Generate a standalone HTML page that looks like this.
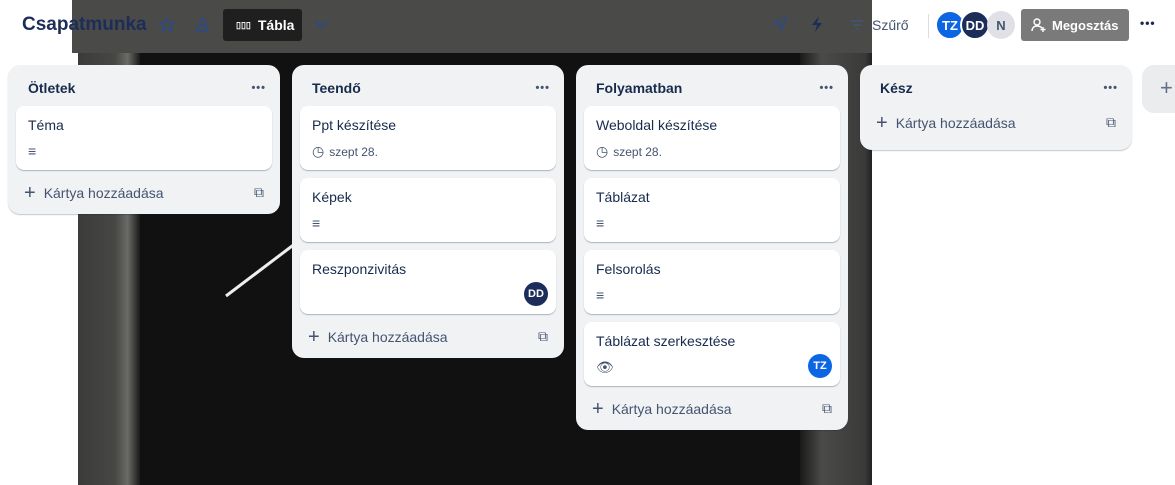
<!DOCTYPE html>
<html><head><meta charset="utf-8"><style>
*{box-sizing:border-box;margin:0;padding:0}
body{width:1175px;height:485px;overflow:hidden;position:relative;background:#fff;font-family:"Liberation Sans",sans-serif;color:#172b4d}
.bg{position:absolute}
.list{position:absolute;width:272px;background:#f1f2f4;border-radius:12px;box-shadow:0 1px 1px rgba(9,30,66,.25)}
.lh{height:41px;display:flex;align-items:center;justify-content:space-between;padding:4px 14px 0 20px;font-size:14px;font-weight:bold;color:#44546f}
.lh span{color:#172b4d}
.dots{font-size:11px;letter-spacing:1px;color:#44546f!important}
.card{margin:0 8px 8px;background:#fff;border-radius:8px;box-shadow:0 1px 1px rgba(9,30,66,.3);height:64px;position:relative;padding:11px 12px;font-size:14px;color:#172b4d}
.card .sub{position:absolute;left:12px;top:37px;font-size:12px;color:#44546f;display:flex;align-items:center;gap:5px}
.add{height:28px;display:flex;align-items:center;justify-content:space-between;padding:0 16px 0 16px;font-size:14px;color:#44546f;margin-bottom:8px}
.add .p{font-size:20px;font-weight:300;margin-right:8px;position:relative;top:1px}
.av{width:24px;height:24px;border-radius:50%;font-size:11px;font-weight:bold;color:#fff;display:flex;align-items:center;justify-content:center;position:absolute;right:8px;bottom:8px}
.hav{width:28px;height:28px;border-radius:50%;font-size:13px;font-weight:bold;display:flex;align-items:center;justify-content:center;position:absolute;top:11px}
</style></head><body>
<div class="bg" style="left:78px;top:0;width:794px;height:485px;background:#111"></div>
<div class="bg" style="left:78px;top:0;width:62px;height:485px;background:linear-gradient(90deg,#3b3b3a,#474745 60%,#6a6a66 80%,#1a1a1a)"></div>
<div class="bg" style="left:800px;top:0;width:72px;height:485px;background:linear-gradient(90deg,#1a1a1a,#4a4b48 30%,#3a3a38 90%,#222)"></div>
<svg class="bg" style="left:0;top:0" width="1175" height="485"><path d="M226 296 L300 240" stroke="#eee" stroke-width="3"/></svg>
<div class="bg" style="left:72px;top:0;width:800px;height:53px;background:#4a4a48"></div>
<div style="position:absolute;left:22px;top:14px;font-size:19px;font-weight:bold;color:#1d2d5a">Csapatmunka</div>
<svg style="position:absolute;left:158px;top:16px" width="18" height="18" viewBox="0 0 24 24"><path d="M12 3l2.7 5.6 6.1.8-4.5 4.2 1.1 6.1L12 16.8 6.6 19.7l1.1-6.1L3.2 9.4l6.1-.8z" fill="none" stroke="#2b4a8a" stroke-width="2"/></svg>
<svg style="position:absolute;left:193px;top:16px" width="18" height="18" viewBox="0 0 24 24"><circle cx="13" cy="8" r="4" fill="none" stroke="#2b4a8a" stroke-width="2"/><path d="M5 20c0-5 4-7 8-7s7 2 7 7z" fill="none" stroke="#2b4a8a" stroke-width="2"/></svg>
<div style="position:absolute;left:223px;top:9px;width:79px;height:32px;background:#1f1f1f;border-radius:3px;color:#fff;font-size:14px;font-weight:bold;display:flex;align-items:center;padding-left:13px"><span style="font-size:9px;margin-right:7px">▯▯▯</span>Tábla</div>
<svg style="position:absolute;left:313px;top:18px" width="16" height="12" viewBox="0 0 16 12"><path d="M2 3l6 6 6-6" stroke="#2b4a8a" stroke-width="2" fill="none"/></svg>
<svg style="position:absolute;left:772px;top:16px" width="16" height="16" viewBox="0 0 24 24"><path d="M21 3L3 10l8 3 3 8z" fill="none" stroke="#2b4a8a" stroke-width="2"/></svg>
<svg style="position:absolute;left:810px;top:16px" width="14" height="16" viewBox="0 0 14 16"><path d="M9 0L2 9h5l-2 7 7-9H7z" fill="#1d2d5a"/></svg>
<svg style="position:absolute;left:850px;top:19px" width="14" height="12" viewBox="0 0 14 12"><path d="M1 2h12M3.5 6h7M5.5 10h3" stroke="#44546f" stroke-width="1.8"/></svg>
<div style="position:absolute;left:872px;top:17px;font-size:14px;color:#44546f">Szűrő</div>
<div style="position:absolute;left:928px;top:14px;width:1px;height:24px;background:#ddd"></div>
<div class="hav" style="left:935px;background:#0c66e4;color:#fff;border:2px solid #fff;width:30px;height:30px;top:10px">TZ</div>
<div class="hav" style="left:960px;background:#1d2d5a;color:#fff;border:2px solid #fff;width:30px;height:30px;top:10px">DD</div>
<div class="hav" style="left:987px;background:#dfe1e6;color:#44546f">N</div>
<div style="position:absolute;left:1021px;top:9px;width:108px;height:32px;background:#7a7a7a;border-radius:3px;color:#fff;font-size:13px;font-weight:bold;display:flex;align-items:center;padding-left:10px"><svg width="16" height="16" viewBox="0 0 16 16" style="margin-right:5px"><circle cx="6" cy="5" r="3" fill="none" stroke="#fff" stroke-width="1.4"/><path d="M1 14c0-3 2-5 5-5s4 1 5 2M12 10v5M9.5 12.5h5" fill="none" stroke="#fff" stroke-width="1.4"/></svg>Megosztás</div>
<div style="position:absolute;left:1140px;top:16px;font-size:12px;font-weight:bold;color:#172b4d;letter-spacing:1px">•••</div>

<div class="list" style="left:8px;top:65px">
<div class="lh"><span>Ötletek</span><span class="dots">•••</span></div>
<div class="card">Téma<div class="sub" style="font-size:14px">≡</div></div>
<div class="add"><span><span class="p">+</span>Kártya hozzáadása</span><span>⧉</span></div>
</div>
<div class="list" style="left:292px;top:65px">
<div class="lh"><span>Teendő</span><span class="dots">•••</span></div>
<div class="card">Ppt készítése<div class="sub"><span style="font-size:14px">◷</span>szept 28.</div></div>
<div class="card">Képek<div class="sub" style="font-size:14px">≡</div></div>
<div class="card">Reszponzivitás<div class="av" style="background:#1d2d5a">DD</div></div>
<div class="add"><span><span class="p">+</span>Kártya hozzáadása</span><span>⧉</span></div>
</div>
<div class="list" style="left:576px;top:65px">
<div class="lh"><span>Folyamatban</span><span class="dots">•••</span></div>
<div class="card">Weboldal készítése<div class="sub"><span style="font-size:14px">◷</span>szept 28.</div></div>
<div class="card">Táblázat<div class="sub" style="font-size:14px">≡</div></div>
<div class="card">Felsorolás<div class="sub" style="font-size:14px">≡</div></div>
<div class="card">Táblázat szerkesztése<div class="sub" style="font-size:14px">👁︎</div><div class="av" style="background:#0c66e4">TZ</div></div>
<div class="add"><span><span class="p">+</span>Kártya hozzáadása</span><span>⧉</span></div>
</div>
<div class="list" style="left:860px;top:65px">
<div class="lh"><span>Kész</span><span class="dots">•••</span></div>
<div class="add" style="margin-top:2px;margin-bottom:14px"><span><span class="p">+</span>Kártya hozzáadása</span><span>⧉</span></div>
</div>
<div style="position:absolute;left:1142px;top:65px;width:60px;height:48px;background:#ebecee;border-radius:12px;font-size:22px;color:#626f86;padding:10px 0 0 18px;font-weight:300">+</div>
</body></html>
